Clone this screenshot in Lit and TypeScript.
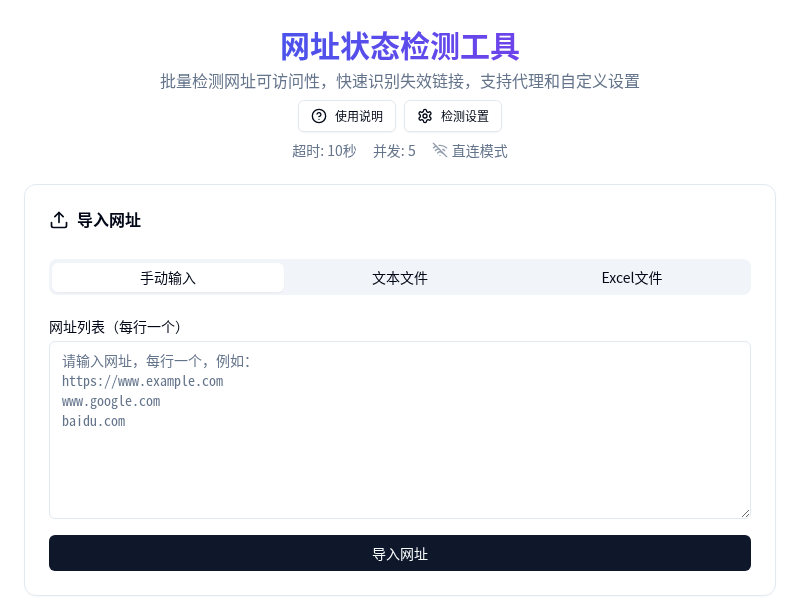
import { LitElement, html, css } from "lit";
import { customElement } from "lit/decorators.js";

@customElement("app-root")
export class AppRoot extends LitElement {
  static styles = css`
    :host { display: block; font-family: "Noto Sans CJK SC", "Noto Sans", sans-serif; color: #020817; height: 600px; overflow: hidden; }
    * { box-sizing: border-box; }
    .page { padding: 24px 24px 0; display: flex; flex-direction: column; will-change: transform; }
    .head { display: flex; flex-direction: column; align-items: center; margin-bottom: 24px; }
    h1 { margin: 0; align-self: stretch; text-align: center; font-size: 30px; line-height: 40px; font-weight: 700; background: linear-gradient(90deg, #2563eb, #9333ea); -webkit-background-clip: text; background-clip: text; color: transparent; }
    .sub { margin-top: 4px; font-size: 16px; line-height: 24px; color: #64748b; }
    .btns { display: flex; gap: 8px; margin-top: 8px; }
    .btn { height: 32px; display: flex; align-items: center; gap: 8px; padding: 0 12px 1px; line-height: 16px; border: 1px solid #e2e8f0; border-radius: 6px; background: #fff; font-size: 12px; box-shadow: 0 1px 2px rgba(0,0,0,.05); color: #020817; font-family: inherit; }
    .btn svg { width: 16px; height: 16px; }
    .meta { display: flex; gap: 16px; margin-top: 8px; font-size: 14px; line-height: 20px; color: #64748b; }
    .mode { display: flex; align-items: center; gap: 4px; }
    .mode svg { width: 16px; height: 16px; }
    .card { border: 1px solid #e2e8f0; border-radius: 12px; padding: 24px; box-shadow: 0 1px 2px rgba(0,0,0,.03); background: #fff; }
    .ct { display: flex; align-items: center; gap: 8px; font-size: 16px; line-height: 20px; font-weight: 600; height: 20px; margin-bottom: 30px; }
    .ct svg { width: 20px; height: 20px; margin-top: 1px; }
    .tabs { display: grid; grid-template-columns: repeat(3, 1fr); height: 36px; background: #f1f5f9; border-radius: 8px; padding: 4px 3px 3px; }
    .tab { display: flex; align-items: center; justify-content: center; font-size: 14px; border-radius: 6px; padding-bottom: 2px; }
    .tab.on { background: #fff; box-shadow: 0 1px 2px rgba(0,0,0,.05); }
    label { display: block; margin-top: 21px; font-size: 14px; line-height: 20px; margin-bottom: 5px; }
    textarea { display: block; width: 100%; height: 178px; padding: 8px 12px; border: 1px solid #e2e8f0; border-radius: 6px; font-family: "Noto Sans Mono CJK SC", "Noto Sans CJK SC", monospace; font-size: 14px; line-height: 20px; background: #fff; outline: none; }
    textarea::placeholder { color: #64748b; opacity: 1; }
    .go { display: block; width: 100%; height: 36px; margin-top: 16px; border: 0; border-radius: 6px; background: #0f172a; color: #f8fafc; font-family: inherit; font-size: 14px; }
  `;

  render() {
    return html`
      <div class="page">
        <div class="head">
          <h1>网址状态检测工具</h1>
          <div class="sub">批量检测网址可访问性，快速识别失效链接，支持代理和自定义设置</div>
          <div class="btns">
            <button class="btn">
              <svg viewBox="0 0 24 24" fill="none" stroke="currentColor" stroke-width="2" stroke-linecap="round" stroke-linejoin="round"><circle cx="12" cy="12" r="10"/><path d="M9.09 9a3 3 0 0 1 5.83 1c0 2-3 3-3 3"/><path d="M12 17h.01"/></svg>
              使用说明
            </button>
            <button class="btn">
              <svg viewBox="0 0 24 24" fill="none" stroke="currentColor" stroke-width="2" stroke-linecap="round" stroke-linejoin="round"><path d="M12.22 2h-.44a2 2 0 0 0-2 2v.18a2 2 0 0 1-1 1.73l-.43.25a2 2 0 0 1-2 0l-.15-.08a2 2 0 0 0-2.73.73l-.22.38a2 2 0 0 0 .73 2.73l.15.1a2 2 0 0 1 1 1.72v.51a2 2 0 0 1-1 1.74l-.15.09a2 2 0 0 0-.73 2.73l.22.38a2 2 0 0 0 2.73.73l.15-.08a2 2 0 0 1 2 0l.43.25a2 2 0 0 1 1 1.73V20a2 2 0 0 0 2 2h.44a2 2 0 0 0 2-2v-.18a2 2 0 0 1 1-1.73l.43-.25a2 2 0 0 1 2 0l.15.08a2 2 0 0 0 2.73-.73l.22-.39a2 2 0 0 0-.73-2.73l-.15-.08a2 2 0 0 1-1-1.74v-.5a2 2 0 0 1 1-1.74l.15-.09a2 2 0 0 0 .73-2.73l-.22-.38a2 2 0 0 0-2.73-.73l-.15.08a2 2 0 0 1-2 0l-.43-.25a2 2 0 0 1-1-1.73V4a2 2 0 0 0-2-2z"/><circle cx="12" cy="12" r="3"/></svg>
              检测设置
            </button>
          </div>
          <div class="meta">
            <span>超时: 10秒</span>
            <span>并发: 5</span>
            <span class="mode">
              <svg viewBox="0 0 24 24" fill="none" stroke="currentColor" stroke-width="2" stroke-linecap="round" stroke-linejoin="round" opacity=".7"><path d="M12 20h.01"/><path d="M8.5 16.43a5 5 0 0 1 7 0"/><path d="M2 8.82a15 15 0 0 1 4.18-2.65"/><path d="M22 8.82a15 15 0 0 0-11.29-3.76"/><path d="M19 12.86a10 10 0 0 0-2.93-1.87"/><path d="M5 12.86a10 10 0 0 1 5.17-2.69"/><path d="m2 2 20 20"/></svg>
              直连模式
            </span>
          </div>
        </div>
        <div class="card">
          <div class="ct">
            <svg viewBox="0 0 24 24" fill="none" stroke="currentColor" stroke-width="2" stroke-linecap="round" stroke-linejoin="round"><path d="M21 15v4a2 2 0 0 1-2 2H5a2 2 0 0 1-2-2v-4"/><path d="m17 8-5-5-5 5"/><path d="M12 3v12"/></svg>
            导入网址
          </div>
          <div class="tabs">
            <div class="tab on">手动输入</div>
            <div class="tab">文本文件</div>
            <div class="tab">Excel文件</div>
          </div>
          <label>网址列表（每行一个）</label>
          <textarea placeholder="请输入网址，每行一个，例如：
https://www.example.com
www.google.com
baidu.com"></textarea>
          <button class="go">导入网址</button>
        </div>
      </div>
    `;
  }
}
